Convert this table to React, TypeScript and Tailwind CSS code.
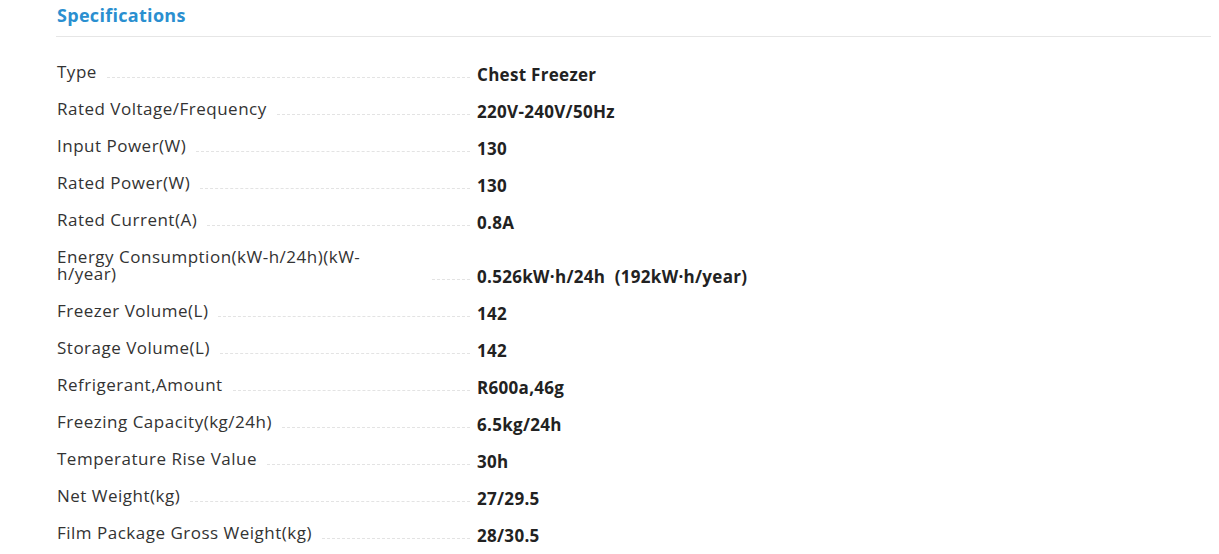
import React from 'react';

type Spec = { label: string; value: string; leaderGap?: string };

const specs: Spec[] = [
  { label: 'Type', value: 'Chest Freezer' },
  { label: 'Rated Voltage/Frequency', value: '220V-240V/50Hz' },
  { label: 'Input Power(W)', value: '130' },
  { label: 'Rated Power(W)', value: '130' },
  { label: 'Rated Current(A)', value: '0.8A' },
  {
    label: 'Energy Consumption(kW-h/24h)(kW-h/year)',
    value: '0.526kW·h/24h\u00a0\u00a0(192kW·h/year)',
    leaderGap: 'ml-[55px]',
  },
  { label: 'Freezer Volume(L)', value: '142' },
  { label: 'Storage Volume(L)', value: '142' },
  { label: 'Refrigerant,Amount', value: 'R600a,46g' },
  { label: 'Freezing Capacity(kg/24h)', value: '6.5kg/24h' },
  { label: 'Temperature Rise Value', value: '30h' },
  { label: 'Net Weight(kg)', value: '27/29.5' },
  { label: 'Film Package Gross Weight(kg)', value: '28/30.5' },
];

function SpecRow({ spec }: { spec: Spec }) {
  return (
    <div className="flex items-end">
      <div className="flex w-[413px] items-end">
        <span className="mb-[1px] max-w-[320px] text-[17px] leading-[17px] tracking-[0.5px] text-[#333]">
          {spec.label}
        </span>
        <span
          className={`mb-[3px] flex-1 border-b border-dashed border-[#e3e3e3] ${spec.leaderGap ?? 'ml-[10px]'}`}
        />
      </div>
      <span className="-mb-[2px] ml-[7px] text-[17px] leading-[17px] font-bold tracking-[0.3px] text-[#222]">
        {spec.value}
      </span>
    </div>
  );
}

export default function App() {
  return (
    <div className="min-h-screen bg-white pl-[56px] pr-[8px] font-['Open_Sans',sans-serif]">
      <div className="border-b border-[#e6e6e6] pt-[5px] pb-[10px]">
        <h2 className="pl-[1px] text-[18px] leading-[21px] font-bold tracking-[0.3px] text-[#2a8fd0]">
          Specifications
        </h2>
      </div>
      <div className="flex flex-col gap-[19px] pt-[26px] pl-[1px]">
        {specs.map((s) => (
          <SpecRow key={s.label} spec={s} />
        ))}
      </div>
    </div>
  );
}
